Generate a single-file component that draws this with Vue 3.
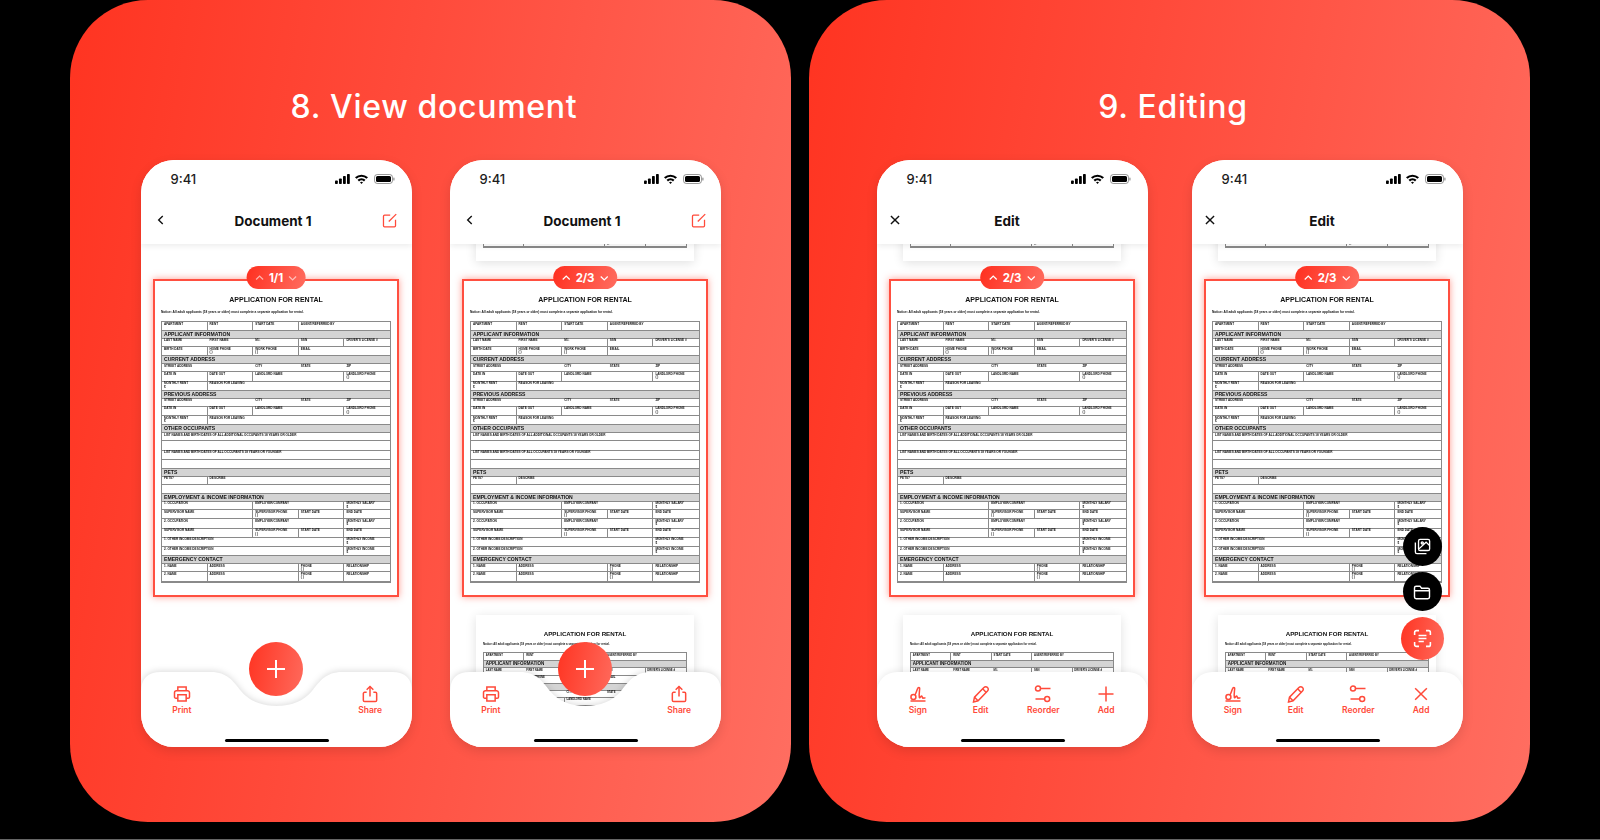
<script setup>
const icons = {
  print: ['M7 8V3.500h10V8', 'M7 17H4.500A1.500 1.500 0 0 1 3 15.500v-5A2.500 2.500 0 0 1 5.500 8h13a2.500 2.500 0 0 1 2.500 2.500v5a1.500 1.500 0 0 1-1.500 1.500H17', 'M7 13h10v7.500H7z'],
  share: ['M12 15V3', 'M8 7l4-4 4 4', 'M8 10H5.500A1.500 1.500 0 0 0 4 11.500v8A1.500 1.500 0 0 0 5.500 21h13a1.500 1.500 0 0 0 1.500-1.500v-8a1.500 1.500 0 0 0-1.500-1.500H16'],
  sign: ['M3 20.500h18', 'M3.500 15.500c0-1.800 1.300-3 3-3 1.600 0 3 1.200 3 3 0 1.700-1.300 3-3 3-1.800 0-3-1.300-3-3z', 'M8.500 13C10 10 11 7 11.500 5.500 12 3.800 14.200 3.500 14 5.500 13.800 8.500 13 13 13.600 16c.4 2 1.900-2 2.900-1.500.5.500 1 2.500 1.500 2.500 1 0 1.500-.7 3 0'],
  pencil: ['M3 21.500l1.200-5.700L15.500 4.200a3 3 0 0 1 4.300 0 3 3 0 0 1 0 4.300L8.500 20.100z', 'M14 5.800l4.300 4.300', 'M4.200 15.800l4.300 4.300'],
  reorder: ['M9 5.500h12', 'M3 18h11', 'M9 5.500a3 3 0 1 1-6 0 3 3 0 0 1 6 0z', 'M20 18a3 3 0 1 1-6 0 3 3 0 0 1 6 0z'],
  plus: ['M12 3v18', 'M3 12h18'],
  close: ['M5 5l14 14', 'M19 5L5 19'],
  back: ['M15 5l-7 7 7 7'],
  compose: ['M13 4.500H5A1.500 1.500 0 0 0 3.500 6v13.500A1.500 1.500 0 0 0 5 21h14a1.500 1.500 0 0 0 1.500-1.500V11', 'M11 13.500L21.500 3'],
  photo: ['M9 3h10a2 2 0 0 1 2 2v10a2 2 0 0 1-2 2H9a2 2 0 0 1-2-2V5a2 2 0 0 1 2-2z', 'M3 7v12a2 2 0 0 0 2 2h12', 'M7.500 15l9-8.500 4 4', 'M13 7.500a1.300 1.300 0 1 1-2.600 0 1.300 1.300 0 0 1 2.600 0z'],
  folder: ['M3 7a2 2 0 0 1 2-2h4.500l2 2.500H19a2 2 0 0 1 2 2V18a2 2 0 0 1-2 2H5a2 2 0 0 1-2-2z', 'M3 10.500h18'],
  scan: ['M3 8V5a2 2 0 0 1 2-2h3', 'M16 3h3a2 2 0 0 1 2 2v3', 'M21 16v3a2 2 0 0 1-2 2h-3', 'M8 21H5a2 2 0 0 1-2-2v-3', 'M7.500 8.500h9', 'M7.500 12h9', 'M7.500 15.500h6'],
  up: ['M5 15l7-7 7 7'],
  down: ['M5 9l7 7 7-7']
}

const docTabs = [{ label: 'Print', icon: 'print' }, { label: 'Share', icon: 'share', col: 4 }]
const editTabs = (last) => [
  { label: 'Sign', icon: 'sign' },
  { label: 'Edit', icon: 'pencil' },
  { label: 'Reorder', icon: 'reorder' },
  { label: 'Add', icon: last }
]

const panels = [
  {
    title: '8. View document',
    cls: 'panel-view',
    phones: [
      { title: 'Document 1', cls: 'doc', page: '1/1', notch: true, tabs: docTabs },
      { title: 'Document 1', cls: 'doc', page: '2/3', notch: true, others: true, tabs: docTabs }
    ]
  },
  {
    title: '9. Editing',
    cls: 'panel-edit',
    phones: [
      { title: 'Edit', cls: 'edit', page: '2/3', others: true, tabs: editTabs('plus') },
      { title: 'Edit', cls: 'edit', page: '2/3', others: true, fabs: true, tabs: editTabs('close') }
    ]
  }
]

// [label, span, line on the right, second line]
const form = [
  { c: [['APARTMENT', 1], ['RENT', 1], ['START DATE', 1], ['AGENT/REFERRED BY', 2]] },
  { s: 'APPLICANT INFORMATION' },
  { c: [['LAST NAME', 1, 0], ['FIRST NAME', 1, 0], ['M.I.', 1], ['SSN', 1], ["DRIVER'S LICENSE #", 1]] },
  { c: [['BIRTH DATE', 1], ['HOME PHONE', 1, 1, '(     )'], ['WORK PHONE', 1, 1, '(     )'], ['EMAIL', 2]] },
  { s: 'CURRENT ADDRESS' },
  { c: [['STREET ADDRESS', 2, 0], ['CITY', 1, 0], ['STATE', 1, 0], ['ZIP', 1]] },
  { c: [['DATE IN', 1], ['DATE OUT', 1], ['LANDLORD NAME', 2], ['LANDLORD PHONE', 1, 1, '(     )']] },
  { c: [['MONTHLY RENT', 1, 1, '$'], ['REASON FOR LEAVING', 4]] },
  { s: 'PREVIOUS ADDRESS' },
  { c: [['STREET ADDRESS', 2, 0], ['CITY', 1, 0], ['STATE', 1, 0], ['ZIP', 1]] },
  { c: [['DATE IN', 1], ['DATE OUT', 1], ['LANDLORD NAME', 2], ['LANDLORD PHONE', 1, 1, '(     )']] },
  { c: [['MONTHLY RENT', 1, 1, '$'], ['REASON FOR LEAVING', 4]] },
  { s: 'OTHER OCCUPANTS' },
  { c: [['LIST NAMES AND BIRTH DATES OF ALL ADDITIONAL OCCUPANTS 18 YEARS OR OLDER', 5]] },
  { c: [['', 5]] },
  { c: [['LIST NAMES AND BIRTH DATES OF ALL OCCUPANTS 18 YEARS OR YOUNGER', 5]] },
  { c: [['', 5]] },
  { s: 'PETS' },
  { c: [['PETS?', 1], ['DESCRIBE', 4]] },
  { c: [['', 5]] },
  { s: 'EMPLOYMENT & INCOME INFORMATION' },
  { c: [['1. OCCUPATION', 2], ['EMPLOYER/COMPANY', 2], ['MONTHLY SALARY', 1, 1, '$']] },
  { c: [['SUPERVISOR NAME', 2], ['SUPERVISOR PHONE', 1, 1, '(     )'], ['START DATE', 1], ['END DATE', 1]] },
  { c: [['2. OCCUPATION', 2], ['EMPLOYER/COMPANY', 2], ['MONTHLY SALARY', 1, 1, '$']] },
  { c: [['SUPERVISOR NAME', 2], ['SUPERVISOR PHONE', 1, 1, '(     )'], ['START DATE', 1], ['END DATE', 1]] },
  { c: [['1. OTHER INCOME DESCRIPTION', 4], ['MONTHLY INCOME', 1, 1, '$']] },
  { c: [['2. OTHER INCOME DESCRIPTION', 4], ['MONTHLY INCOME', 1, 1, '$']] },
  { s: 'EMERGENCY CONTACT' },
  { c: [['1. NAME', 1], ['ADDRESS', 2], ['PHONE', 1, 1, '(     )'], ['RELATIONSHIP', 1]] },
  { c: [['2. NAME', 1], ['ADDRESS', 2], ['PHONE', 1, 1, '(     )'], ['RELATIONSHIP', 1]] }
]

const sheets = (phone) => {
  if (!phone.others) return [{ key: 'main', kind: 'main' }]
  return [
    { key: 'prev', kind: 'prev' },
    { key: 'main', kind: 'main' },
    { key: 'next', kind: 'next' }
  ]
}
</script>

<template>
  <main class="page">
    <section v-for="panel in panels" :key="panel.title" class="panel" :class="panel.cls">
      <h2 class="panel-title">{{ panel.title }}</h2>
      <div class="phones">
        <article v-for="(phone, i) in panel.phones" :key="i" class="phone" :class="phone.cls">
          <header class="top">
            <div class="status">
              <span class="time">9:41</span>
              <svg class="status-icons" width="60" height="12" viewBox="0 0 60 12">
                <rect x="0" y="7.500" width="2.800" height="3.500" rx=".8" />
                <rect x="4" y="5.500" width="2.800" height="5.500" rx=".8" />
                <rect x="8" y="3" width="2.800" height="8" rx=".8" />
                <rect x="12" y="1" width="2.800" height="10" rx=".8" />
                <path d="M20 4.200a9.500 9.500 0 0 1 13 0l-1.500 1.600a7.300 7.300 0 0 0-10 0z" />
                <path d="M22.500 6.800a6 6 0 0 1 8 0l-1.500 1.600a3.800 3.800 0 0 0-5 0z" />
                <path d="M25 9.300a2.400 2.400 0 0 1 3 0L26.500 11z" />
                <rect x="39.500" y="1.500" width="18" height="9" rx="2.800" fill="none" stroke="#000" stroke-opacity=".4" />
                <rect x="41" y="3" width="15" height="6" rx="1.500" />
                <rect x="58.300" y="4.500" width="1.200" height="3" rx=".6" fill-opacity=".45" />
              </svg>
            </div>
            <nav class="nav">
              <svg class="nav-icon" viewBox="0 0 24 24" width="14" height="14">
                <path v-for="d in icons[phone.cls === 'doc' ? 'back' : 'close']" :key="d" :d="d" />
              </svg>
              <span class="nav-title">{{ phone.title }}</span>
              <svg v-if="phone.cls === 'doc'" class="compose" viewBox="0 0 24 24" width="17" height="17">
                <path v-for="d in icons.compose" :key="d" :d="d" />
              </svg>
            </nav>
          </header>

          <div class="scroller">
            <template v-for="sheet in sheets(phone)" :key="sheet.key">
              <div class="sheet-box" :class="'sheet-' + sheet.kind">
                <div v-if="sheet.kind === 'main'" class="pager">
                  <svg viewBox="0 0 24 24" width="12" height="12" :class="{ faded: phone.page === '1/1' }">
                    <path v-for="d in icons.up" :key="d" :d="d" />
                  </svg>
                  <b>{{ phone.page }}</b>
                  <svg viewBox="0 0 24 24" width="12" height="12" :class="{ faded: phone.page === '1/1' }">
                    <path v-for="d in icons.down" :key="d" :d="d" />
                  </svg>
                </div>
                <div class="sheet">
                  <h3 class="sheet-title">APPLICATION FOR RENTAL</h3>
                  <p class="sheet-note">Notice: All adult applicants (18 years or older) must complete a separate application for rental.</p>
                  <div class="form">
                    <template v-for="(row, r) in form" :key="r">
                      <div v-if="row.s" class="form-section">{{ row.s }}</div>
                      <div v-else class="form-row">
                        <div
                          v-for="(cell, c) in row.c"
                          :key="c"
                          class="form-cell"
                          :class="{ open: cell[2] === 0 }"
                          :style="{ width: cell[1] * 20 + '%' }"
                        >
                          <span>{{ cell[0] }}</span>
                          <span v-if="cell[3]">{{ cell[3] }}</span>
                        </div>
                      </div>
                    </template>
                  </div>
                </div>
              </div>
            </template>
          </div>

          <div class="fab-stack" v-if="phone.fabs">
            <button class="mini">
              <svg viewBox="0 0 24 24" width="19" height="19"><path v-for="d in icons.photo" :key="d" :d="d" /></svg>
            </button>
            <button class="mini">
              <svg viewBox="0 0 24 24" width="20" height="20"><path v-for="d in icons.folder" :key="d" :d="d" /></svg>
            </button>
            <button class="scan">
              <svg viewBox="0 0 24 24" width="21" height="21"><path v-for="d in icons.scan" :key="d" :d="d" /></svg>
            </button>
          </div>

          <footer class="bar" :class="{ notched: phone.notch }">
            <svg v-if="phone.notch" class="bar-bg" width="271" height="75" viewBox="0 0 271 75">
              <path d="M0 20Q0 0 20 0H70C86 0 92 9 100 19C108 29 121 34 135.500 34C150 34 163 29 171 19C179 9 185 0 201 0H251Q271 0 271 20V75H0Z" />
            </svg>
            <div class="tabs">
              <div
                v-for="tab in phone.tabs"
                :key="tab.label"
                class="tab"
                :style="tab.col ? { gridColumn: tab.col } : null"
              >
                <svg viewBox="0 0 24 24" width="20" height="20"><path v-for="d in icons[tab.icon]" :key="d" :d="d" /></svg>
                <span>{{ tab.label }}</span>
              </div>
            </div>
            <div class="home"></div>
          </footer>

          <button v-if="phone.notch" class="fab">
            <svg viewBox="0 0 24 24" width="24" height="24"><path v-for="d in icons.plus" :key="d" :d="d" /></svg>
          </button>
        </article>
      </div>
    </section>
  </main>
</template>

<style>
html, body {
  margin: 0;
  background: #000;
}
</style>

<style scoped>
.page {
  display: flex;
  gap: 18px;
  height: 840px;
  padding: 0 70px;
  box-sizing: border-box;
  background: #000;
  border-bottom: 1px solid #666;
  overflow: hidden;
  font-family: Inter, "Noto Sans", sans-serif;
}

.panel {
  width: 721px;
  height: 822px;
  flex-shrink: 0;
  padding-top: 88px;
  box-sizing: border-box;
  border-radius: 78px;
  background: linear-gradient(100deg, #ff3421 0%, #ff4a3a 40%, #ff6e61 100%);
}

.panel-title {
  margin: 0 0 34px;
  padding-left: 7px;
  height: 38px;
  font-size: 32px;
  line-height: 38px;
  font-weight: 500;
  letter-spacing: 0.7px;
  text-align: center;
  color: #fff;
}

.phones {
  display: flex;
  justify-content: center;
}

.panel-view .phones {
  gap: 38px;
}

.panel-edit .phones {
  gap: 44px;
}

.phone {
  position: relative;
  display: flex;
  flex-direction: column;
  width: 271px;
  height: 587px;
  flex-shrink: 0;
  overflow: hidden;
  border-radius: 33px;
  background: #fff;
  box-shadow: 0 4px 12px rgba(0, 0, 0, 0.12);
}

.top {
  position: relative;
  z-index: 2;
  height: 84px;
  flex-shrink: 0;
  background: #fff;
  box-shadow: 0 2px 6px rgba(0, 0, 0, 0.08);
}

.status {
  display: flex;
  align-items: center;
  justify-content: space-between;
  height: 38px;
  padding: 0 17px 0 30px;
}

.time {
  font-size: 13px;
  font-weight: 500;
  color: #1c1c1c;
}

.status-icons {
  fill: #000;
}

.nav {
  display: flex;
  align-items: center;
  justify-content: center;
  position: relative;
  height: 45px;
}

.nav-icon {
  position: absolute;
  left: 13px;
  top: 15px;
  fill: none;
  stroke: #111;
  stroke-width: 2.400;
}

.edit .nav-icon {
  left: 11px;
}

.compose {
  position: absolute;
  right: 14px;
  top: 14px;
  fill: none;
  stroke: #ff4a3a;
  stroke-width: 1.800;
}

.nav-title {
  font-size: 13.500px;
  font-weight: 700;
  color: #111;
}

.doc .nav-title {
  margin-right: 6px;
}

.edit .nav-title {
  margin-right: 10px;
}

.scroller {
  flex: 1;
  display: flex;
  flex-direction: column;
  align-items: center;
  gap: 18px;
  min-height: 0;
  padding-top: 35px;
  overflow: hidden;
}

.sheet-box {
  position: relative;
  flex-shrink: 0;
  background: #fff;
}

.sheet-main {
  width: 246px;
  height: 318px;
  box-sizing: border-box;
  border: 2px solid #ff4f40;
  box-shadow: 0 0 7px rgba(255, 60, 40, 0.5);
}

.sheet-prev,
.sheet-next {
  width: 218px;
  height: 282px;
  overflow: hidden;
  box-shadow: 0 2px 10px rgba(0, 0, 0, 0.12);
}

.sheet-prev {
  margin-top: -300px;
}

.sheet-prev .sheet,
.sheet-next .sheet {
  zoom: 0.886;
}

.sheet {
  width: 246px;
  height: 318px;
  box-sizing: border-box;
  padding: 0 8px;
  font-family: "Liberation Sans", Arial, sans-serif;
  color: #111;
  filter: blur(0.25px);
}

.sheet-main .sheet {
  margin: -2px;
}

.sheet-title {
  margin: 0;
  padding-top: 16.500px;
  font-size: 7px;
  line-height: 8px;
  font-weight: 700;
  text-align: center;
}

.sheet-note {
  margin: 6.500px 0 6px;
  font-size: 3.200px;
  line-height: 5px;
  font-weight: 700;
  white-space: nowrap;
}

.form {
  border: 1px solid #8a8a8a;
}

.form-section {
  height: 6.700px;
  box-sizing: border-box;
  padding-left: 2px;
  font-size: 5.100px;
  line-height: 6.700px;
  font-weight: 700;
  background: #d4d4d4;
}

.form-row {
  display: flex;
  height: 9.250px;
  box-sizing: border-box;
  border-bottom: 1px solid #8a8a8a;
}

.form-section + .form-row {
  border-top: 1px solid #8a8a8a;
}

.form-cell {
  display: flex;
  flex-direction: column;
  box-sizing: border-box;
  padding: 0.500px 2px;
  font-size: 3.100px;
  line-height: 3.400px;
  font-weight: 700;
  white-space: nowrap;
  border-right: 1px solid #8a8a8a;
}

.form-cell:last-child,
.form-cell.open {
  border-right: 0;
}

.pager {
  position: absolute;
  z-index: 1;
  top: -15px;
  left: 50%;
  transform: translateX(-50%);
  display: flex;
  align-items: center;
  gap: 4px;
  height: 23px;
  padding: 0 6.500px;
  border-radius: 12px;
  background: linear-gradient(110deg, #ff2f1f, #ff6d60);
  color: #fff;
}

.pager b {
  font-size: 11.500px;
  font-weight: 700;
  letter-spacing: -0.2px;
}

.pager svg {
  fill: none;
  stroke: #fff;
  stroke-width: 2.400;
}

.pager svg.faded {
  opacity: 0.6;
}

.bar {
  position: absolute;
  z-index: 3;
  left: 0;
  right: 0;
  bottom: 0;
  height: 75px;
  border-radius: 20px 20px 0 0;
  background: #fff;
  box-shadow: 0 -2px 6px rgba(0, 0, 0, 0.07);
}

.bar.notched {
  background: none;
  box-shadow: none;
}

.bar-bg {
  position: absolute;
  left: 0;
  top: 0;
  fill: #fff;
  filter: drop-shadow(0 -1px 3px rgba(0, 0, 0, 0.14));
}

.tabs {
  position: relative;
  display: grid;
  grid-template-columns: repeat(4, 1fr);
  padding: 12px 10px 0;
}

.tab {
  display: flex;
  flex-direction: column;
  align-items: center;
  gap: 1px;
  font-size: 8.500px;
  line-height: 11px;
  font-weight: 600;
  color: #ff4a3a;
}

.tab svg {
  fill: none;
  stroke: #ff4a3a;
  stroke-width: 1.800;
}

.home {
  position: absolute;
  left: 84px;
  bottom: 5px;
  width: 104px;
  height: 3.500px;
  border-radius: 2px;
  background: #000;
}

.fab {
  position: absolute;
  z-index: 4;
  left: 108px;
  top: 482px;
  display: flex;
  align-items: center;
  justify-content: center;
  width: 54px;
  height: 54px;
  padding: 0;
  border: 0;
  border-radius: 50%;
  background: linear-gradient(100deg, #ff3422, #ff6a5c);
}

.fab svg {
  fill: none;
  stroke: #fff;
  stroke-width: 2;
}

.fab-stack {
  position: absolute;
  z-index: 4;
  right: 19px;
  bottom: 87px;
  display: flex;
  flex-direction: column;
  align-items: center;
  gap: 6px;
}

.mini,
.scan {
  display: flex;
  align-items: center;
  justify-content: center;
  padding: 0;
  border: 0;
  border-radius: 50%;
}

.mini {
  width: 39px;
  height: 39px;
  background: #000;
}

.mini svg {
  fill: none;
  stroke: #fff;
  stroke-width: 1.700;
}

.scan {
  width: 43px;
  height: 43px;
  background: linear-gradient(100deg, #ff3422, #ff6a5c);
}

.scan svg {
  fill: none;
  stroke: #fff;
  stroke-width: 1.800;
}
</style>
